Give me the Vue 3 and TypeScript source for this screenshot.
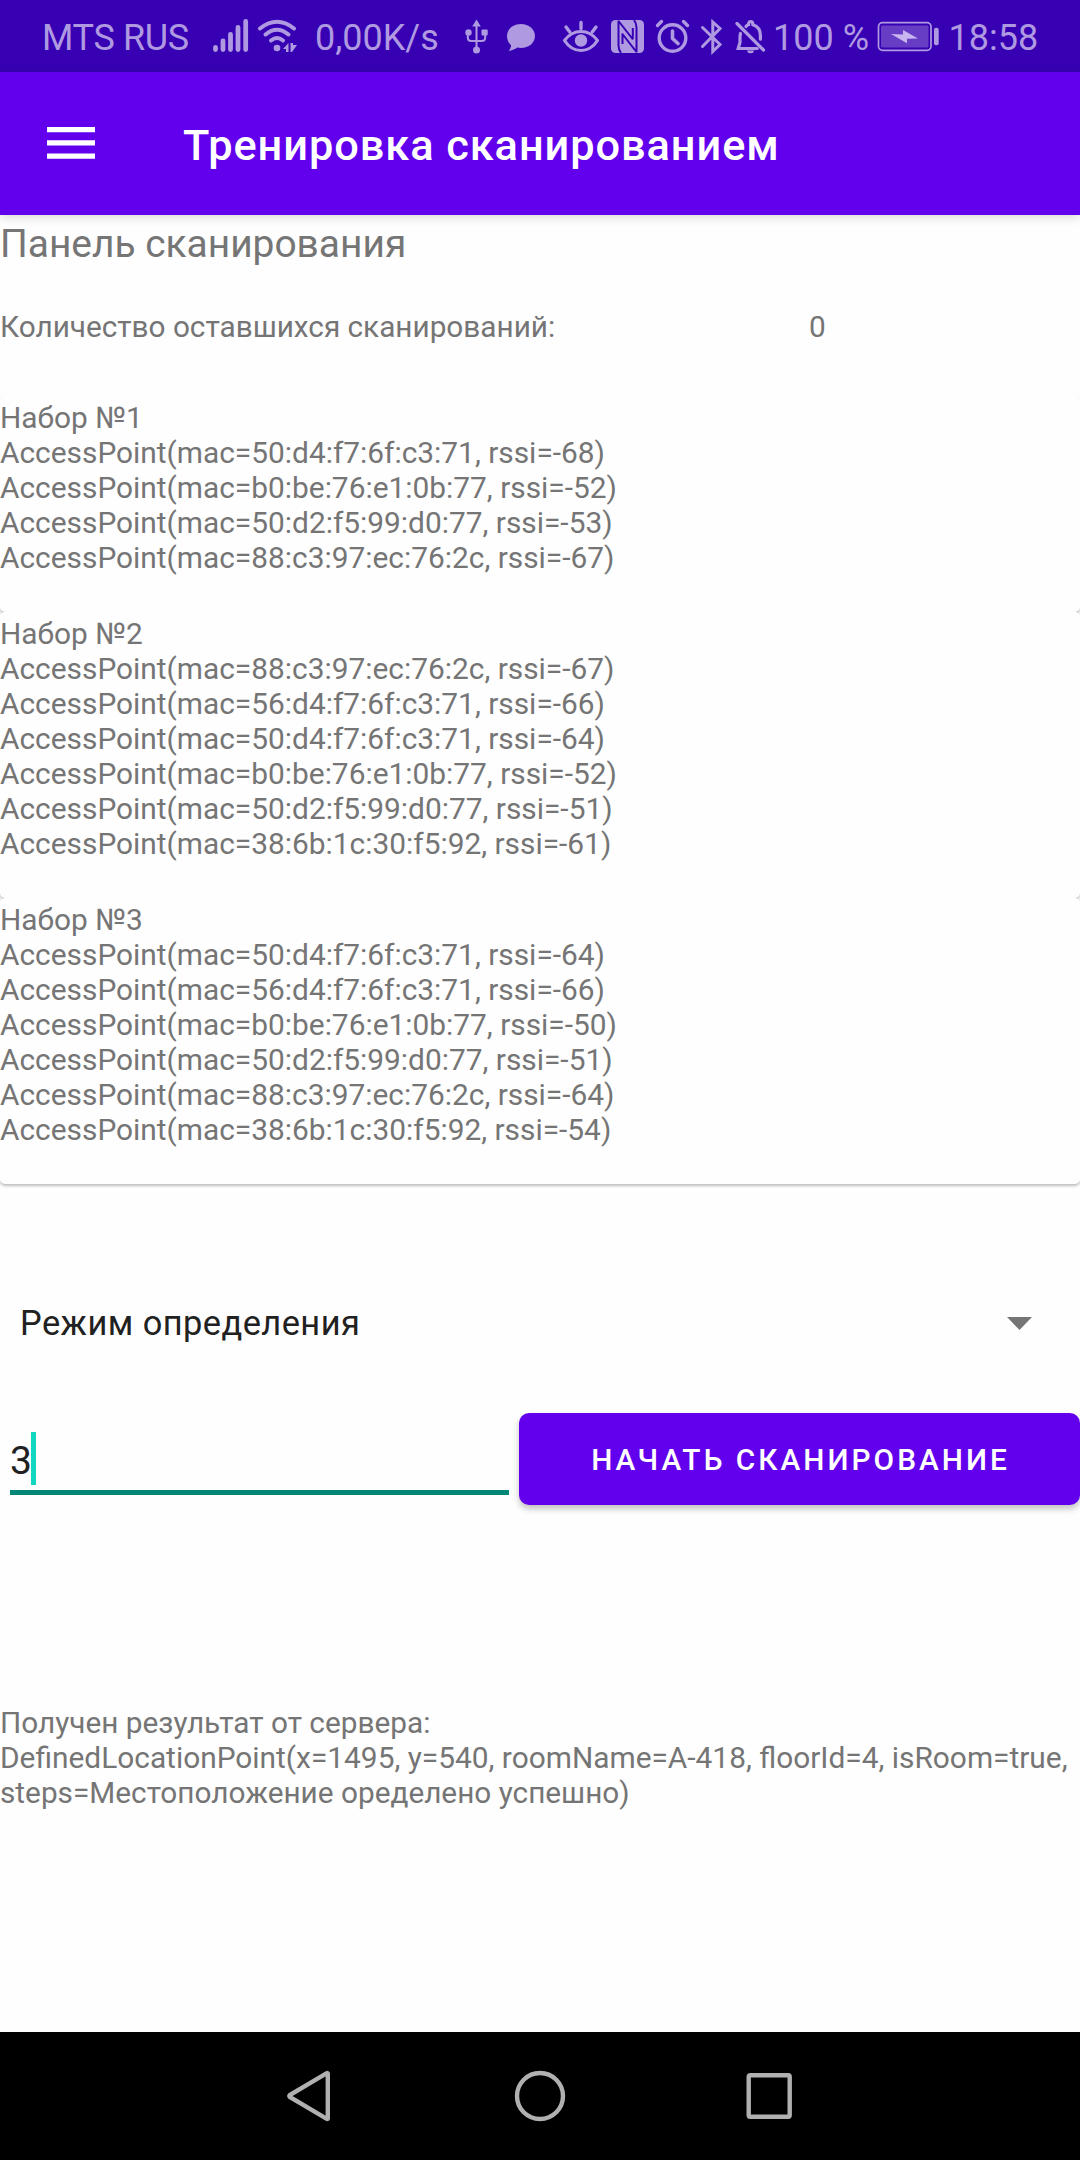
<script setup lang="ts">
import { ref } from 'vue'

interface AccessPoint {
  mac: string
  rssi: number
}

const remaining = ref(0)
const scanCount = ref('3')

const scanSets: AccessPoint[][] = [
  [
    { mac: '50:d4:f7:6f:c3:71', rssi: -68 },
    { mac: 'b0:be:76:e1:0b:77', rssi: -52 },
    { mac: '50:d2:f5:99:d0:77', rssi: -53 },
    { mac: '88:c3:97:ec:76:2c', rssi: -67 },
  ],
  [
    { mac: '88:c3:97:ec:76:2c', rssi: -67 },
    { mac: '56:d4:f7:6f:c3:71', rssi: -66 },
    { mac: '50:d4:f7:6f:c3:71', rssi: -64 },
    { mac: 'b0:be:76:e1:0b:77', rssi: -52 },
    { mac: '50:d2:f5:99:d0:77', rssi: -51 },
    { mac: '38:6b:1c:30:f5:92', rssi: -61 },
  ],
  [
    { mac: '50:d4:f7:6f:c3:71', rssi: -64 },
    { mac: '56:d4:f7:6f:c3:71', rssi: -66 },
    { mac: 'b0:be:76:e1:0b:77', rssi: -50 },
    { mac: '50:d2:f5:99:d0:77', rssi: -51 },
    { mac: '88:c3:97:ec:76:2c', rssi: -64 },
    { mac: '38:6b:1c:30:f5:92', rssi: -54 },
  ],
]
</script>

<template>
  <div class="screen">
    <header class="status">
      <span class="status-text carrier">MTS RUS</span>
      <svg class="signal" viewBox="212 16 38 40" width="38" height="40">
        <path d="M215.5 47.5v2M223 41v8.500M230.500 34.500v15M238 27.500v22M245.700 21.500v28" stroke="currentColor" stroke-width="4.8" stroke-linecap="round" fill="none" />
      </svg>
      <svg class="wifi" viewBox="256 16 44 40" width="44" height="40">
        <g fill="none" stroke="currentColor" stroke-width="4" stroke-linecap="round">
          <path d="M260 28.500Q277 15 294 28.500" />
          <path d="M265.500 34.500Q277 25 288.500 34.500" />
          <path d="M271 40.500Q277 35.500 283 40.500" />
        </g>
        <circle cx="277" cy="48" r="3.300" fill="currentColor" />
        <path d="M288.500 43v9h-2.500v-3h-3zM290.500 43v9l1.500 0 5-7h-4v-2z" fill="currentColor" />
      </svg>
      <span class="status-text speed">0,00K/s</span>
      <svg class="usb" viewBox="464 18 26 37" width="26" height="37">
        <path d="M476.500 24v24M467.800 33v4.500q0 3.500 3.500 3.500h10.400q3.500 0 3.500-3.500v-4.500" fill="none" stroke="currentColor" stroke-width="2" />
        <path d="M476.500 19.500l4.300 7h-8.600z" fill="currentColor" />
        <circle cx="476.500" cy="50" r="3.500" fill="currentColor" />
        <circle cx="468.500" cy="32.500" r="3.200" fill="currentColor" />
        <rect x="481.500" y="29.500" width="6.200" height="6" rx="1" fill="currentColor" />
      </svg>
      <svg class="chat" viewBox="506 22 30 31" width="30" height="31">
        <path d="M521 24c7.800 0 14 5 14 12s-6.200 12-14 12c-1.300 0-2.600-.1-3.800-.4-2 1.600-5 2.900-8.700 3.400 1.400-1.500 2.400-3.400 2.600-5.600-2.600-2.300-4.100-5.600-4.100-9.400 0-7 6.200-12 14-12z" fill="currentColor" />
      </svg>
      <svg class="eye" viewBox="562 18 38 36" width="38" height="36">
        <path d="M564.500 40.500Q571 31.500 581 31.500T597.500 40.500Q591 50.500 581 50.500T564.500 40.500z" fill="none" stroke="currentColor" stroke-width="3.200" stroke-linejoin="round" />
        <circle cx="581" cy="40.500" r="6.200" fill="currentColor" />
        <path d="M581 22.500v6M566 27l3.800 5M596 27l-3.800 5" stroke="currentColor" stroke-width="3.400" stroke-linecap="round" />
      </svg>
      <svg class="nfc" viewBox="610 19 35 35" width="35" height="35">
        <rect x="611" y="20" width="33" height="33" rx="4.500" fill="currentColor" />
        <path d="M618.500 20.500v25q0 4 2.500 7.500M636.500 52.500v-25q0-4-2.500-7.500M618.500 21L633 39.500M636.500 52L622 33.500M622.500 34v10M632.800 28v11" fill="none" stroke="#3700b3" stroke-width="2" />
      </svg>
      <svg class="alarm" viewBox="655 18 35 37" width="35" height="37">
        <circle cx="672.500" cy="38" r="13.300" fill="none" stroke="currentColor" stroke-width="3.400" />
        <path d="M672.500 31v7.500l5.500 5" fill="none" stroke="currentColor" stroke-width="3.600" stroke-linecap="round" stroke-linejoin="round" />
        <path d="M657.500 25.500l4-4M687.500 25.500l-4-4" stroke="currentColor" stroke-width="3.400" stroke-linecap="round" />
      </svg>
      <svg class="bluetooth" viewBox="700 18 24 38" width="24" height="38">
        <path d="M702.500 27.500L720 44.500 712.800 51.500V22L720 28.500 702.500 46.500" fill="none" stroke="currentColor" stroke-width="3" stroke-linecap="round" />
      </svg>
      <svg class="bell" viewBox="735 18 32 37" width="32" height="37">
        <g fill="none" stroke="currentColor" stroke-width="3.200" stroke-linecap="round">
          <path d="M737 23.500L763.500 50" />
          <path d="M740.500 33.500q-.5 2-.5 4v5l-1.800 6h19M746 26.500q1-1.500 2.500-1.800 0-3.200 2.200-3.200t2.200 3.200q7.500 2.500 7.500 10.500v4" />
        </g>
        <path d="M746.800 50.500h7.600q-1 2.800-3.800 2.800t-3.800-2.800z" fill="currentColor" />
      </svg>
      <span class="status-text percent">100 %</span>
      <svg class="battery" viewBox="877 21 63 31" width="63" height="31">
        <rect x="878.500" y="22.700" width="52.500" height="27.600" rx="4" fill="none" stroke="currentColor" stroke-width="1.700" />
        <rect x="881" y="25.500" width="47.500" height="22" rx="1.500" fill="currentColor" fill-opacity=".4" />
        <rect x="934" y="27.700" width="4.700" height="17.600" rx="2" fill="currentColor" />
        <path d="M891 34l12 .5v-4.500l15 8.500-11 .3v4.500z" fill="#c8b5f0" />
      </svg>
      <span class="status-text clock">18:58</span>
    </header>

    <div class="app-bar">
      <svg class="menu" viewBox="0 0 48 32" width="48" height="32">
        <path d="M0 0h48v5.300H0zM0 13.200h48v5.300H0zM0 26.400h48v5.300H0z" fill="#fff" />
      </svg>
      <h1>Тренировка сканированием</h1>
    </div>

    <main>
      <h2>Панель сканирования</h2>
      <div class="remaining">
        <span class="remaining-label">Количество оставшихся сканирований:</span>
        <span>{{ remaining }}</span>
      </div>

      <section class="sets">
        <article v-for="(points, i) in scanSets" :key="i" class="card">
          <p>Набор №{{ i + 1 }}</p>
          <p v-for="p in points" :key="p.mac">AccessPoint(mac={{ p.mac }}, rssi={{ p.rssi }})</p>
        </article>
      </section>

      <div class="spinner">
        <span>Режим определения</span>
        <svg viewBox="0 0 25 13" width="25" height="13"><path d="M0 0h25L12.500 13z" fill="#757575" /></svg>
      </div>

      <div class="controls">
        <div class="field">
          <span>{{ scanCount }}</span>
          <i class="caret"></i>
        </div>
        <button type="button">НАЧАТЬ СКАНИРОВАНИЕ</button>
      </div>

      <div class="result">
        <p>Получен результат от сервера:</p>
        <p class="location">DefinedLocationPoint(x=1495, y=540, roomName=A-418, floorId=4, isRoom=true,</p>
        <p>steps=Местоположение оределено успешно)</p>
      </div>
    </main>

    <nav>
      <svg viewBox="0 0 50 54" width="50" height="54">
        <path d="M42.800 4.500v45q0 .8-1 .3L4.800 28q-1-1 0-2L41.800 4.200q1-.5 1 .3z" />
      </svg>
      <svg viewBox="0 0 54 54" width="54" height="54">
        <circle cx="27" cy="27" r="23" />
      </svg>
      <svg viewBox="0 0 50 54" width="50" height="54">
        <rect x="3.700" y="6.200" width="41" height="41.500" rx="1.500" />
      </svg>
    </nav>
  </div>
</template>

<style>
body {
  margin: 0;
  background: #fefefe;
}
</style>

<style scoped>
.screen {
  display: flex;
  flex-direction: column;
  width: 1080px;
  height: 2160px;
  overflow: hidden;
  background: #fefefe;
  color: #757575;
  font-family: "Roboto", sans-serif;
  font-size: 29.78px;
  line-height: 35px;
}

h1,
h2,
p {
  margin: 0;
  font-weight: 400;
}

svg {
  display: block;
  flex: none;
}

.status {
  flex: none;
  display: flex;
  align-items: flex-start;
  height: 72px;
  background: #3700b3;
  color: #af99e1;
}

.status-text {
  flex: none;
  font-size: 36px;
  line-height: 76px;
  height: 72px;
  white-space: nowrap;
}

.carrier { width: 170px; margin-left: 42px; letter-spacing: -0.35px; }
.signal { margin-top: 16px; }
.wifi { margin: 16px 0 0 6px; }
.speed { width: 149px; margin-left: 15px; }
.usb { margin-top: 18px; }
.chat { margin: 22px 0 0 16px; }
.eye { margin: 18px 0 0 26px; }
.nfc { margin: 19px 0 0 10px; }
.alarm { margin: 18px 0 0 10px; }
.bluetooth { margin: 18px 0 0 10px; }
.bell { margin: 18px 0 0 11px; }
.percent { width: 104px; margin-left: 6px; }
.battery { margin-top: 21px; }
.clock { margin-left: 8.5px; }

.app-bar {
  position: relative;
  z-index: 1;
  flex: none;
  display: flex;
  align-items: center;
  height: 143px;
  background: #6200ee;
  box-shadow: 0 2px 10px rgba(0, 0, 0, 0.16);
}

.menu {
  margin: 0 0 2px 47px;
}

h1 {
  padding-top: 5px;
  margin-left: 88px;
  color: #fff;
  font-size: 43.3px;
  font-weight: 500;
  line-height: 50px;
  letter-spacing: 0.95px;
  white-space: nowrap;
}

main {
  flex: 1;
  padding-top: 6px;
}

h2 {
  font-size: 38.9px;
  line-height: 46px;
}

.remaining {
  display: flex;
  margin-top: 42px;
}

.remaining-label {
  width: 809px;
  letter-spacing: -0.02px;
}

.sets {
  margin-top: 52px;
}

.card {
  box-sizing: border-box;
  padding: 4px 0 37px;
  border-radius: 5px;
  background: #fefefe;
  box-shadow: 0 2px 3px rgba(0, 0, 0, 0.26);
  font-size: 29.87px;
}

.card p,
.result p {
  height: 35px;
  white-space: nowrap;
}

.result .location {
  font-size: 29.87px;
}

.spinner {
  display: flex;
  align-items: center;
  justify-content: space-between;
  height: 62px;
  margin-top: 108px;
  padding: 0 48px 0 20px;
  color: #212121;
  font-size: 34.4px;
  letter-spacing: 0.45px;
}

.controls {
  display: flex;
  align-items: flex-start;
  margin-top: 59px;
}

.field {
  box-sizing: border-box;
  display: flex;
  align-items: center;
  width: 499px;
  height: 82px;
  margin-left: 10px;
  padding-top: 15px;
  border-bottom: 5px solid #018678;
  color: #212121;
  font-size: 39px;
}

.field span {
  width: 21px;
  height: 31px;
}

.caret {
  width: 5px;
  height: 53px;
  margin-bottom: 1px;
  background: #12d6c0;
}

button {
  width: 561px;
  height: 92px;
  margin: 0 0 0 10px;
  padding: 0 0 0 2px;
  border: 0;
  border-radius: 10px;
  background: #6200ee;
  box-shadow: 0 4px 6px rgba(0, 0, 0, 0.24);
  color: #fff;
  font: 500 29.8px/35px "Roboto", sans-serif;
  letter-spacing: 3.02px;
}

.result {
  margin-top: 200px;
}

nav {
  flex: none;
  display: flex;
  align-items: center;
  height: 128px;
  padding-left: 285px;
  background: #000;
}

nav svg {
  fill: none;
  stroke: #b0b0b0;
  stroke-width: 4.4;
}

nav svg + svg {
  margin-left: 178px;
}
</style>
